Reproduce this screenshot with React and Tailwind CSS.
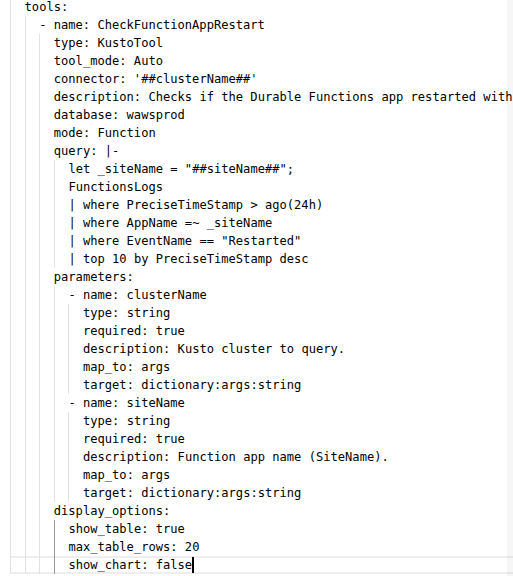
import React from 'react';

// [yaml indent, text]
const lines = [
    [0, 'tools:'],
    [2, '- name: CheckFunctionAppRestart'],
    [4, 'type: KustoTool'],
    [4, 'tool_mode: Auto'],
    [4, "connector: '##clusterName##'"],
    [4, 'description: Checks if the Durable Functions app restarted with'],
    [4, 'database: wawsprod'],
    [4, 'mode: Function'],
    [4, 'query: |-'],
    [6, 'let _siteName = "##siteName##";'],
    [6, 'FunctionsLogs'],
    [6, '| where PreciseTimeStamp > ago(24h)'],
    [6, '| where AppName =~ _siteName'],
    [6, '| where EventName == "Restarted"'],
    [6, '| top 10 by PreciseTimeStamp desc'],
    [4, 'parameters:'],
    [6, '- name: clusterName'],
    [8, 'type: string'],
    [8, 'required: true'],
    [8, 'description: Kusto cluster to query.'],
    [8, 'map_to: args'],
    [8, 'target: dictionary:args:string'],
    [6, '- name: siteName'],
    [8, 'type: string'],
    [8, 'required: true'],
    [8, 'description: Function app name (SiteName).'],
    [8, 'map_to: args'],
    [8, 'target: dictionary:args:string'],
    [4, 'display_options:'],
    [6, 'show_table: true'],
    [6, 'max_table_rows: 20'],
    [6, 'show_chart: false'],
];

const activeFrom = 29;
const currentLine = lines.length - 1;

const EditorLine = ({ indent, text, index }) => {
    const guides = (indent + 2) / 2;
    const isActive = index >= activeFrom;
    const isCurrent = index === currentLine;

    return (
        <div
            className={`flex h-[18px] items-stretch whitespace-pre ${isCurrent ? 'shadow-[inset_0_2px_0_#eeeeee,inset_0_-2px_0_#eeeeee]' : ''}`}
        >
            {Array.from({ length: guides }).map((_, g) => (
                <span
                    key={g}
                    className={`shrink-0 w-[14.6px] border-l ${isActive && g === guides - 1 ? 'border-[#9a9a9a]' : 'border-[#e2e2e2]'}`}
                />
            ))}
            <span className="leading-[18px] shrink-0 flex items-stretch">
                {text}
                {isCurrent && <span className="w-[2px] bg-black my-[1px]" />}
            </span>
        </div>
    );
};

export default function App() {
    return (
        <div className="relative w-full h-[576px] overflow-hidden bg-white">
            <div className="mt-[-2px] pl-[10px] text-[12.1px] text-black font-['DejaVu_Sans_Mono',monospace]">
                {lines.map(([indent, text], i) => (
                    <EditorLine key={i} indent={indent} text={text} index={i} />
                ))}
            </div>
            {/* overview ruler */}
            <div className="absolute top-0 right-0 bottom-0 w-[6px] bg-black/[0.035]" />
        </div>
    );
}
